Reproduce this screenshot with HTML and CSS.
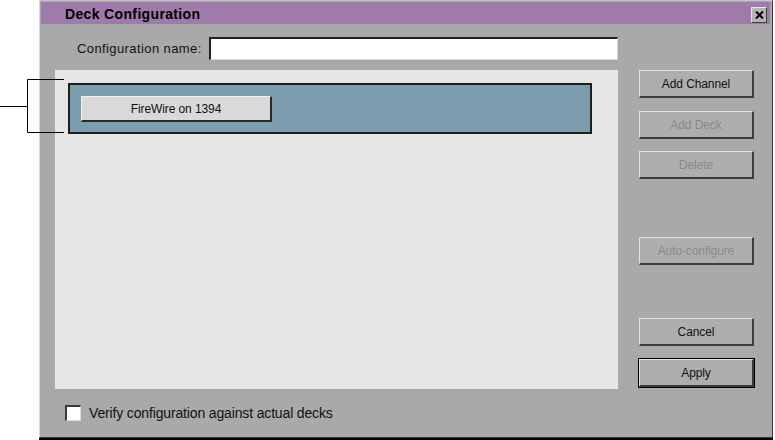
FILE: index.html
```html
<!DOCTYPE html>
<html>
<head>
<meta charset="utf-8">
<link rel="stylesheet" href="styles.css">
</head>
<body>
<div class="screen">
  <svg class="bracket" width="40" height="140" viewBox="0 0 40 140">
    <path d="M64 79.5H27.5V132.5H64M0 106.5H27.5" fill="none" stroke="#000" stroke-width="1"/>
  </svg>
  <div class="dialog">
    <div class="titlebar">
      <span class="title">Deck Configuration</span>
      <span class="close">
        <svg width="9" height="8" viewBox="0 0 9 8"><path d="M1 0.5L8 7.5M8 0.5L1 7.5" stroke="#000" stroke-width="2"/></svg>
      </span>
    </div>
    <div class="name-row">
      <label class="name-label">Configuration name:</label>
      <div class="name-input"></div>
    </div>
    <div class="main">
      <div class="panel">
        <div class="channel">
          <div class="btn deck-btn">FireWire on 1394</div>
        </div>
      </div>
      <div class="buttons">
        <div class="btn b-add-channel">Add Channel</div>
        <div class="btn disabled b-add-deck">Add Deck</div>
        <div class="btn disabled b-delete">Delete</div>
        <div class="btn disabled b-auto">Auto-configure</div>
        <div class="btn b-cancel">Cancel</div>
        <div class="default b-apply"><div class="btn">Apply</div></div>
      </div>
    </div>
    <div class="verify-row">
      <span class="checkbox"></span>
      <span class="verify-label">Verify configuration against actual decks</span>
    </div>
  </div>
</div>
</body>
</html>
```

FILE: styles.css
```css
html, body {
  margin: 0;
  padding: 0;
  background: #ffffff;
}
.screen {
  position: relative;
  width: 775px;
  height: 440px;
  overflow: hidden;
  font-family: "Liberation Sans", Arial, sans-serif;
  font-size: 12px;
  color: #000;
}
.bracket {
  position: absolute;
  left: 0;
  top: 0;
  overflow: visible;
}
.dialog {
  margin-left: 39px;
  width: 734px;
  height: 438px;
  box-sizing: border-box;
  background: #a9a9a9;
  border-left: 1px solid #d6d6d6;
  border-top: 1px solid #c4c4c4;
  border-right: 1px solid #3a3a3a;
  border-bottom: 1px solid #3a3a3a;
  box-shadow: 0 2px 0 #000;
  display: flex;
  flex-direction: column;
}
.titlebar {
  margin: 1px 2px 0 1px;
  height: 22px;
  background: #a07aab;
  display: flex;
  align-items: center;
  justify-content: space-between;
}
.title {
  margin-left: 24px;
  font-weight: bold;
  font-size: 14px;
  letter-spacing: 0.35px;
  padding-top: 2px;
}
.close {
  width: 16px;
  height: 16px;
  margin-right: 3px;
  margin-top: 3px;
  background: #b4b4b4;
  box-sizing: border-box;
  border-top: 1px solid #e6e6e6;
  border-left: 1px solid #e6e6e6;
  border-right: 1px solid #404040;
  border-bottom: 1px solid #404040;
  display: flex;
  align-items: center;
  justify-content: center;
}
.name-row {
  display: flex;
  align-items: center;
  margin-top: 13px;
  height: 23px;
}
.name-label {
  margin-left: 37px;
  width: 132px;
  font-size: 13px;
  letter-spacing: 0.4px;
  color: #111;
}
.name-input {
  width: 409px;
  height: 23px;
  box-sizing: border-box;
  background: #fff;
  border-top: 2px solid #202020;
  border-left: 2px solid #202020;
  border-right: 1px solid #d8d8d8;
  border-bottom: 1px solid #d8d8d8;
}
.main {
  display: grid;
  grid-template-columns: 563px 115px;
  column-gap: 21px;
  margin-top: 10px;
  margin-left: 15px;
}
.panel {
  height: 319px;
  background: #e6e6e6;
  padding: 13px 0 0 13px;
  box-sizing: border-box;
}
.channel {
  width: 524px;
  height: 51px;
  box-sizing: border-box;
  background: #7b9dae;
  border: 2px solid #1e1e1e;
  padding: 11px 0 0 11px;
}
.btn {
  box-sizing: border-box;
  background: #aeaeae;
  border-top: 1px solid #e2e2e2;
  border-left: 1px solid #e2e2e2;
  border-right: 2px solid #3c3c3c;
  border-bottom: 2px solid #3c3c3c;
  display: flex;
  align-items: center;
  justify-content: center;
  font-size: 12px;
  letter-spacing: -0.1px;
  color: #111;
}
.deck-btn {
  width: 191px;
  height: 26px;
  background: #d9d9d9;
  border-top: 1px solid #f0f0f0;
  border-left: 1px solid #f0f0f0;
  border-right: 2px solid #2a2a2a;
  border-bottom: 2px solid #2a2a2a;
}
.buttons {
  display: flex;
  flex-direction: column;
}
.buttons > .btn {
  height: 28px;
}
.disabled {
  color: #8a8a8a;
}
.b-add-deck { margin-top: 13px; }
.b-delete { margin-top: 12px; }
.b-auto { margin-top: 58px; }
.b-cancel { margin-top: 53px; }
.b-apply {
  margin-top: 12px;
  margin-left: -1px;
  margin-right: -1px;
  height: 30px;
  border: 1px solid #000;
  box-sizing: border-box;
}
.b-apply .btn {
  height: 28px;
}
.verify-row {
  display: flex;
  align-items: center;
  margin-top: 16px;
  margin-left: 25px;
  height: 16px;
}
.checkbox {
  width: 16px;
  height: 16px;
  box-sizing: border-box;
  background: #fff;
  border-top: 2px solid #3a3a3a;
  border-left: 2px solid #3a3a3a;
  border-right: 1px solid #dcdcdc;
  border-bottom: 1px solid #dcdcdc;
}
.verify-label {
  margin-left: 8px;
  font-size: 14px;
  letter-spacing: -0.15px;
  color: #111;
}
```
